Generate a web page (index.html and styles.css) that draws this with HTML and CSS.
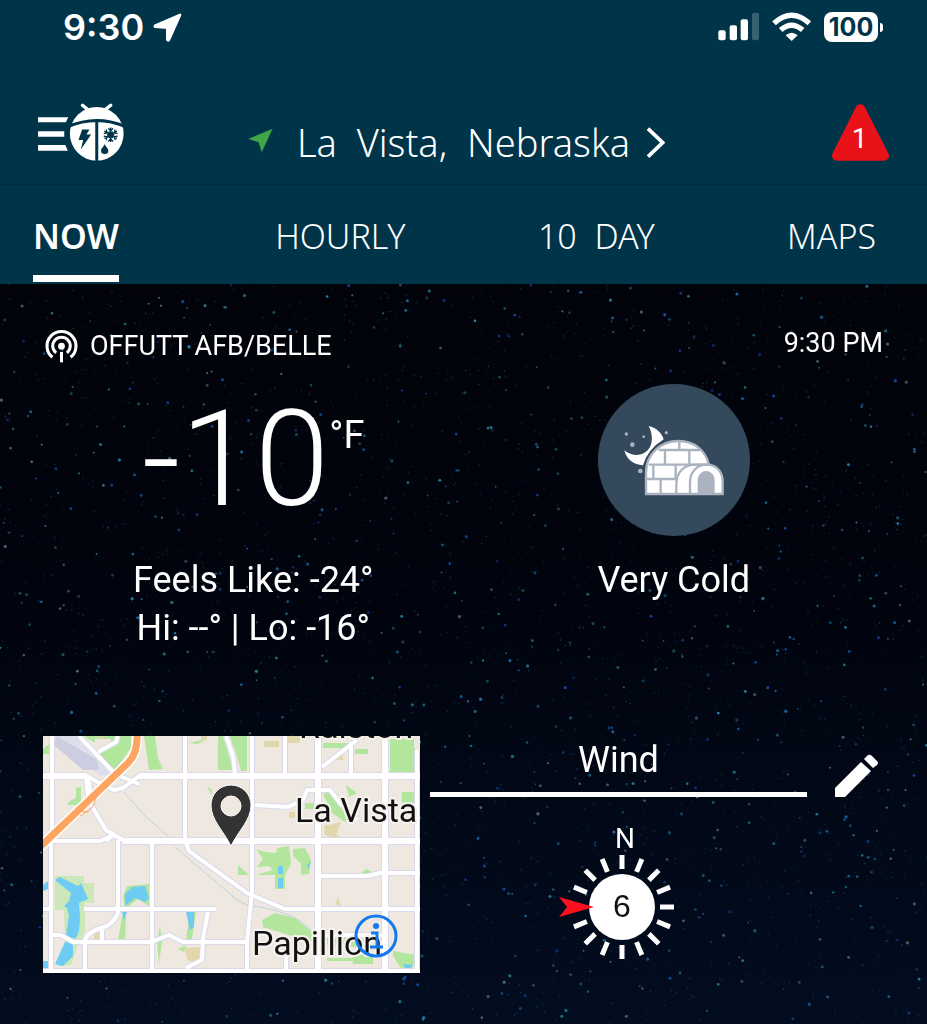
FILE: index.html
```html
<!DOCTYPE html>
<html lang="en">
<head>
    <meta charset="UTF-8">
    <meta name="viewport" content="width=device-width, initial-scale=1.0">
    <title>La Vista, Nebraska</title>
    <link rel="stylesheet" href="styles.css">
</head>
<body>
    <header class="top">
        <div class="status-bar">
            <div class="status-left">
                <span>9:30</span>
                <svg width="29" height="29" viewBox="368 40 87 87"><path d="M374 78 449 46 416 120Q413 124 411 120V84L374 81Z" fill="#fff" stroke="#fff" stroke-width="8" stroke-linejoin="round"/></svg>
            </div>
            <div class="status-right">
                <svg width="42" height="30" viewBox="234 38 126 90" fill="#fff">
                    <rect x="235" y="93" width="22" height="30" rx="6"/>
                    <rect x="269" y="78" width="22" height="45" rx="6"/>
                    <rect x="302" y="60" width="22" height="63" rx="6"/>
                    <rect x="336" y="40" width="21" height="83" rx="6" opacity=".22"/>
                </svg>
                <svg width="40" height="30" viewBox="396 35 120 90" fill="none" stroke="#fff" stroke-width="16">
                    <path d="M402 69Q455 21 508 69"/>
                    <path d="M422 89Q455 60 488 89"/>
                    <path d="M437 105Q455 90 473 105L455 122Z" fill="#fff" stroke="none"/>
                </svg>
                <span class="battery">100</span>
            </div>
        </div>
        <div class="header-row">
            <button class="menu-button" aria-label="Menu">
                <svg width="87" height="59" viewBox="24 309 262 178">
                    <path d="M24 352H115L108 367H24ZM24 394H103V411H24ZM24 436H106L114 453H24Z" fill="#fff"/>
                    <path d="M158 316 174 329M243 316 227 329" stroke="#fff" stroke-width="10" stroke-linecap="round"/>
                    <circle cx="201" cy="402" r="81" fill="#fff"/>
                    <path d="M112 381Q201 342 290 381M201 362V486" fill="none" stroke="#003449" stroke-width="9"/>
                    <path d="M157 389H179L170 404H184L153 449 160 421H146Z" fill="#003449"/>
                    <g stroke="#003449" stroke-width="4" fill="none">
                        <path id="arm" d="M243 405V383M236 385 243 393 250 385M237 396 243 402 249 396"/>
                        <use href="#arm" transform="rotate(60 243 405)"/>
                        <use href="#arm" transform="rotate(120 243 405)"/>
                        <use href="#arm" transform="rotate(180 243 405)"/>
                        <use href="#arm" transform="rotate(240 243 405)"/>
                        <use href="#arm" transform="rotate(300 243 405)"/>
                    </g>
                    <path d="M225 433C221 443 214 446 214 453A11 10 0 0 0 236 453C236 446 229 443 225 433Z" fill="#003449"/>
                </svg>
            </button>
            <button class="location">
                <svg width="25" height="25" viewBox="46 113 75 75"><path d="M47 146 120 115 87 186 78 156Z" fill="#3fa648"/></svg>
                <span class="location-name">La  Vista,  Nebraska</span>
                <svg width="19" height="31" viewBox="1251 117 57 93"><path d="M1257 122 1301 164 1257 206" fill="none" stroke="#fff" stroke-width="11"/></svg>
            </button>
            <button class="alert" aria-label="1 alert">
                <svg width="57" height="57" viewBox="576 309 171 171">
                    <path d="M661 325 732 464H591Z" fill="#e81218" stroke="#e81218" stroke-width="30" stroke-linejoin="round"/>
                    <text x="659" y="441" class="alert-count">1</text>
                </svg>
            </button>
        </div>
        <nav class="tabs">
            <a href="#now" class="tab active">NOW</a>
            <a href="#hourly" class="tab">HOURLY</a>
            <a href="#tenday" class="tab">10  DAY</a>
            <a href="#maps" class="tab">MAPS</a>
        </nav>
    </header>

    <main class="sky">
        <canvas class="stars" id="stars"></canvas>

        <div class="station-row">
            <div class="station">
                <svg width="33" height="33" viewBox="47 59 98 98" fill="none" stroke="#fff" stroke-width="9">
                    <path d="M69 140A43 43 0 1 1 123 140"/>
                    <path d="M80 127A26 26 0 1 1 112 127"/>
                    <path d="M96 124V155"/>
                    <circle cx="96" cy="107" r="10" fill="#fff" stroke="none"/>
                </svg>
                <span>OFFUTT AFB/BELLE</span>
            </div>
            <time>9:30 PM</time>
        </div>

        <section class="current">
            <div class="current-col">
                <div class="temp"><span class="degrees">-10</span><span class="unit">°F</span></div>
                <div class="reading">Feels Like: -24°</div>
                <div class="reading">Hi: --° | Lo: -16°</div>
            </div>
            <div class="current-col">
                <svg class="condition" width="152" height="152" viewBox="85 222 456 456">
                    <circle cx="313" cy="450" r="228" fill="#34495c"/>
                    <path d="M237 348C258 388 245 435 198 435Q180 434 164 421C171 449 192 464 220 466Q234 418 282 388C276 367 258 353 237 348Z" fill="#fff"/>
                    <g fill="#aab3bf">
                        <circle cx="170" cy="372" r="5"/>
                        <circle cx="222" cy="380" r="4"/>
                        <circle cx="290" cy="368" r="5"/>
                        <circle cx="188" cy="404" r="7"/>
                        <circle cx="212" cy="483" r="7"/>
                    </g>
                    <path d="M229 552V488C229 432 272 393 327 393C375 393 408 422 418 464C444 468 459 488 459 514V552Z" fill="#fff" stroke="#aab3bf" stroke-width="7"/>
                    <g fill="none" stroke="#aab3bf" stroke-width="7">
                        <path d="M267 420H392M237 464H420M232 507H320M329 396V420M286 420V464M359 420V464M251 464V507M318 464V507M273 507V550"/>
                        <path d="M320 550V522C320 487 342 464 378 464H418M361 550V517C361 485 383 464 411 464"/>
                    </g>
                    <path d="M384 552V513C384 473 435 473 435 513V552Z" fill="#aab3bf"/>
                </svg>
                <div class="reading">Very Cold</div>
            </div>
        </section>

        <section class="details">
            <div class="map">
                <svg class="map-image" viewBox="0 0 377 237" preserveAspectRatio="xMidYMid slice">
                    <defs>
                        <g id="streets" fill="none" stroke-linejoin="round">
                            <path d="M9 0V96L8 110V237M142 0V104L146 115 193 149 204 157 242 173H377M109 106V237M209 0V155L204 206V237M374 14V237M243 217V237M242 0V39M308 6V39"/>
                            <path d="M0 40H44L60 49 71 54 80 52 96 40H377M0 235H377M10 105H58L70 99 80 104H377M75 104V176Q72 188 58 192T42 204V237M41 173H173M0 173H8M165 176 160 202 159 224 143 232M10 199H18L30 206H108L126 199 140 206H206M59 194V206"/>
                            <path d="M36 0 72 38 96 48M75 0 73 6 55 16M43 41 45 60 51 74 63 94 80 104M63 105 70 99M183 0 190 20 192 38M279 31 310 7 314 4M212 69 245 71 260 64 264 54H287L297 67 314 84M275 140H325L337 137H377M277 199H340"/>
                        </g>
                        <path id="main-streets" fill="none" d="M275 0V237M342 0V237M96 40H377M80 105H377M0 40H44M44 41 48 66"/>
                    </defs>
                    <rect width="377" height="237" fill="#eee8e1"/>
                    <path d="M10 0H36L72 38 58 40 10 8Z" fill="#dfdfec"/>
                    <path d="M14 0 54 24 56 34 40 34 11 9Z" fill="#cccde0"/>
                    <!-- parks -->
                    <g fill="#b1e69c">
                        <path d="M41 0H88V12L72 34 62 26 54 14 68 8V3H52V7Z"/>
                        <path d="M101 0H112L115 22 120 33 106 34Z"/>
                        <path d="M0 13 6 8V18H0Z"/>
                        <path d="M33 52 38 51V69H24L28 64 33 62Z"/>
                        <path d="M146 7 164 3 155 8Z"/>
                        <path d="M175 0H180L190 34H175ZM187 0H204V35H198L194 20Z"/>
                        <path d="M347 3H371V12L377 18V37H347Z"/>
                        <path d="M280 7H305V12H280ZM312 13H325V18H312Z"/>
                        <path d="M164 50 169 54V60ZM280 58 290 56 300 64 306 80 302 86 289 77ZM303 49 314 57 306 61ZM359 56H373V67H359ZM262 67H271V73H262Z"/>
                        <path d="M213 113 222 116 233 117 234 112 246 110 248 128 242 139H213L230 134 226 130 214 131 220 123ZM250 113 262 112 268 124 266 138 258 139 258 128 250 120Z"/>
                        <path d="M195 129 206 139H195ZM232 139H242V153H232Z"/>
                        <path d="M219 184 232 177 252 182 270 197 268 206 220 191Z"/>
                        <path d="M284 200 310 201 325 205V212L284 209ZM284 222H310V219H330V228H310V225H284ZM350 215 373 219 368 237H361L350 220ZM213 234H222V237H213ZM318 137 324 133 330 137Z"/>
                        <path d="M80 160 84 150 97 149 106 148V170L95 163 82 173ZM79 180H83L82 206H75ZM117 190 119 205 116 228 114 205ZM147 176H153L149 203H143ZM135 213 143 209 141 216Z"/>
                    </g>
                    <path d="M12 140H41V147H51V167H42V195L36 206 28 229 14 230 22 205 21 174H12Z" fill="#cbe8b8"/>
                    <g fill="#e2d7ac">
                        <path d="M221 5H236V11H221ZM245 0H257V7H245ZM290 18H300V24H290ZM281 90 298 86 292 102 282 99ZM246 76H252V82H246ZM52 197H57V205H50ZM141 212 157 211V225H145ZM292 168 295 161 298 170ZM282 99H296V101ZM54 0H62L58 4ZM158 0H164V4H158Z"/>
                    </g>
                    <g fill="#6ecbf3">
                        <path d="M0 149 5 145V153L0 155ZM12 144 17 141 35 150 38 147 45 163 36 167 37 182 36 195 33 202 27 203 23 199 26 180 24 172 21 170 26 165 28 157Z"/>
                        <path d="M22 206 30 207V220L20 230 12 228ZM0 225 5 225V233H0Z"/>
                        <path d="M82 158 89 151 102 150 106 162 102 166 92 162 82 170ZM79 176H84L81 184ZM143 176H151V191L147 194Z"/>
                        <path d="M235 131 238 129 240 131V138H235ZM235 142H240V152H235ZM264 130 268 124 266 132ZM360 228 370 229 364 235Z"/>
                    </g>
                    <path d="M81 56 103 81 126 101M132 111 193 163M187 158Q198 169 210 170T240 177Q258 182 270 197" fill="none" stroke="#bdd3dd" stroke-width="1"/>
                    <!-- streets: casing first, fill on top -->
                    <use href="#streets" class="street-casing"/>
                    <use href="#main-streets" class="main-casing"/>
                    <use href="#streets" class="street-fill"/>
                    <use href="#main-streets" class="main-fill"/>
                    <!-- highway -->
                    <g fill="none">
                        <path d="M94 -2Q95 17 85 27L-4 112" stroke="#fff" stroke-width="10"/>
                        <path d="M37 80 49 72 56 55M33 75 46 76" stroke="#fda560" stroke-width="1"/>
                        <path d="M94 -2Q95 17 85 27L-4 112" stroke="#fda560" stroke-width="7"/>
                    </g>
                    <g class="place">
                        <text x="256" y="2">Ralston</text>
                        <text x="252" y="86">La Vista</text>
                        <text x="209" y="219">Papillion</text>
                    </g>
                    <path fill-rule="evenodd" d="M188 110C180 94 168 84 168 69A20 20 0 0 1 208 69C208 84 196 94 188 110ZM188 60A10 10 0 1 0 188 80A10 10 0 1 0 188 60Z" fill="#333" stroke="#fff" stroke-width="1"/>
                </svg>
                <button class="map-info" aria-label="Map information">
                    <svg width="44" height="44" viewBox="-22 -22 44 44" fill="none" stroke="#1479ee">
                        <circle r="20" stroke-width="3"/>
                        <path d="M-5 -3H1V11M-6 11H7" stroke-width="3"/>
                        <circle cy="-10" r="3" fill="#1479ee" stroke="none"/>
                    </svg>
                </button>
            </div>
            <div class="wind">
                <h2>Wind</h2>
                <svg class="compass" width="126" height="141" viewBox="-66 -86 126 141">
                    <text x="3" y="-59" class="north">N</text>
                    <g stroke="#fff" stroke-width="5">
                        <path id="ticks" d="M0 -38V-52M0 38V52"/>
                        <use href="#ticks" transform="rotate(22.5)"/>
                        <use href="#ticks" transform="rotate(45)"/>
                        <use href="#ticks" transform="rotate(67.5)"/>
                        <path d="M38 0H52"/>
                        <use href="#ticks" transform="rotate(112.5)"/>
                        <use href="#ticks" transform="rotate(135)"/>
                        <use href="#ticks" transform="rotate(157.5)"/>
                    </g>
                    <circle r="33" fill="#fff"/>
                    <path d="M-28 0-63 -10-55 0-63 10Z" fill="#ff101f"/>
                    <text x="0" y="10" class="speed">6</text>
                </svg>
            </div>
            <button class="edit" aria-label="Edit">
                <svg width="44" height="44" viewBox="0 0 44 44" fill="#fff"><path d="M0 34 26 8 36 17 10 43H0ZM29 5 33 1Q35 0 37 2L42 7Q44 9 42 11L38 14Z"/></svg>
            </button>
        </section>
    </main>

    <script src="stars.js"></script>
</body>
</html>
```
FILE: styles.css
```css
* {
    box-sizing: border-box;
}
body {
    margin: 0;
    min-height: 100vh;
    display: flex;
    flex-direction: column;
    font-family: Roboto, "Liberation Sans", sans-serif;
    color: #fff;
    background: #020b1e;
}
button {
    padding: 0;
    border: 0;
    background: none;
    color: inherit;
    font: inherit;
    cursor: pointer;
}
svg {
    display: block;
}

/* header */
.top {
    background: #003449;
}
.status-bar {
    display: flex;
    justify-content: space-between;
    height: 80px;
    padding: 3px 49px 29px 63px;
    font-family: Inter, sans-serif;
    font-weight: 600;
}
.status-left, .status-right {
    display: flex;
    align-items: center;
}
.status-left {
    gap: 9px;
    font-size: 36px;
}
.status-right {
    gap: 12px;
}
.battery {
    position: relative;
    width: 54px;
    border-radius: 8px;
    background: #fff;
    color: #003449;
    font-size: 25px;
    font-weight: 700;
    line-height: 30px;
    text-align: center;
}
.battery::after {
    content: "";
    position: absolute;
    top: 11px;
    right: -5px;
    width: 3px;
    height: 9px;
    border-radius: 0 4px 4px 0;
    background: #fff;
}
.header-row {
    display: grid;
    grid-template-columns: 1fr auto 1fr;
    align-items: center;
    height: 105px;
    padding: 0 38px;
    border-bottom: 1px solid #002a3d;
}
.location {
    display: flex;
    align-items: center;
    padding: 20px 14px 0 0;
}
.location-name {
    margin: 0 16px 0 24px;
    font-family: "Noto Sans", sans-serif;
    font-size: 38px;
    font-weight: 300;
    line-height: 54px;
    white-space: pre;
}
.location svg:first-child {
    margin-bottom: 4px;
}
.alert {
    justify-self: end;
}
.menu-button {
    justify-self: start;
}
.alert-count {
    fill: #fff;
    font-size: 84px;
    text-anchor: middle;
}
.tabs {
    display: flex;
    justify-content: space-between;
    padding: 0 51px 2px 33px;
}
.tab {
    padding: 26px 0 13px;
    border-bottom: 7px solid transparent;
    color: #fff;
    font-family: "Noto Sans", sans-serif;
    font-size: 34px;
    font-weight: 300;
    line-height: 51px;
    text-decoration: none;
    white-space: pre;
}
.tab.active {
    margin-right: 24px;
    border-color: #fff;
    font-weight: 600;
}

/* current conditions */
.sky {
    position: relative;
    flex: 1;
    isolation: isolate;
    background: linear-gradient(#02030a, #01040e 45%, #020d20);
}
.stars {
    position: absolute;
    inset: 0;
    z-index: -1;
    width: 100%;
    height: 100%;
}
.station-row {
    display: flex;
    justify-content: space-between;
    padding: 43px 44px 0 45px;
    font-size: 27px;
    line-height: 38px;
}
.station {
    display: flex;
    align-items: center;
    gap: 12px;
}
.station-row time {
    line-height: 32px;
}
.current {
    display: grid;
    grid-template-columns: 1fr 1fr;
    padding: 19px 43px 84px;
}
.current-col {
    display: flex;
    flex-direction: column;
    align-items: center;
}
.temp {
    display: flex;
    margin-bottom: 20px;
}
.degrees {
    font-size: 134px;
    font-weight: 300;
    line-height: 152px;
}
.unit {
    padding-top: 30px;
    font-size: 38px;
    line-height: 42px;
}
.condition {
    margin-bottom: 20px;
}
.reading {
    font-size: 36px;
    line-height: 48px;
}

/* map and wind */
.details {
    display: grid;
    grid-template-columns: 1fr 1fr 80px;
    gap: 10px;
    padding: 0 30px 40px 43px;
}
.map {
    position: relative;
}
.map-image {
    width: 100%;
    height: auto;
}
.map-info {
    position: absolute;
    right: 22px;
    bottom: 15px;
}
.street-casing {
    stroke: #d9d9eb;
    stroke-width: 6px;
}
.main-casing {
    stroke: #d9d9eb;
    stroke-width: 8px;
}
.street-fill {
    stroke: #fff;
    stroke-width: 4px;
}
.main-fill {
    stroke: #fff;
    stroke-width: 6px;
}
.place {
    font-size: 34px;
    fill: #111;
    stroke: #f6f2ee;
    stroke-width: 4px;
    stroke-linejoin: round;
    paint-order: stroke;
}
.wind {
    display: flex;
    flex-direction: column;
}
.wind h2 {
    margin: 0 0 24px;
    padding-bottom: 8px;
    border-bottom: 5px solid #fff;
    font-size: 36px;
    font-weight: 400;
    line-height: 48px;
    text-align: center;
}
.compass {
    align-self: center;
    overflow: visible;
}
.north {
    fill: #fff;
    font-size: 28px;
    text-anchor: middle;
}
.speed {
    fill: #111;
    font-family: "Liberation Sans", sans-serif;
    font-size: 32px;
    text-anchor: middle;
}
.edit {
    align-self: start;
    justify-self: center;
    padding-top: 18px;
}
```
FILE: stars.js
```js
const canvas = document.getElementById('stars');
const ctx = canvas.getContext('2d');
const colors = ['#1c6fa8', '#2a8fb8', '#2f7fa0', '#1550b0', '#5a7080'];
let seed = 7;

function random() {
    seed = (seed * 16807) % 2147483647;
    return seed / 2147483647;
}

function drawStars() {
    seed = 7;
    canvas.width = canvas.clientWidth;
    canvas.height = canvas.clientHeight;
    const count = canvas.width * canvas.height / 200;
    for (let i = 0; i < count; i++) {
        const bright = random() < 0.25;
        ctx.globalAlpha = bright ? 0.4 + random() * 0.5 : 0.15 + random() * 0.25;
        ctx.fillStyle = colors[Math.floor(random() * colors.length)];
        ctx.beginPath();
        ctx.arc(random() * canvas.width, random() * canvas.height, bright ? 0.9 + random() * 0.8 : 0.8, 0, Math.PI * 2);
        ctx.fill();
    }
}

drawStars();
window.addEventListener('resize', drawStars);
```
